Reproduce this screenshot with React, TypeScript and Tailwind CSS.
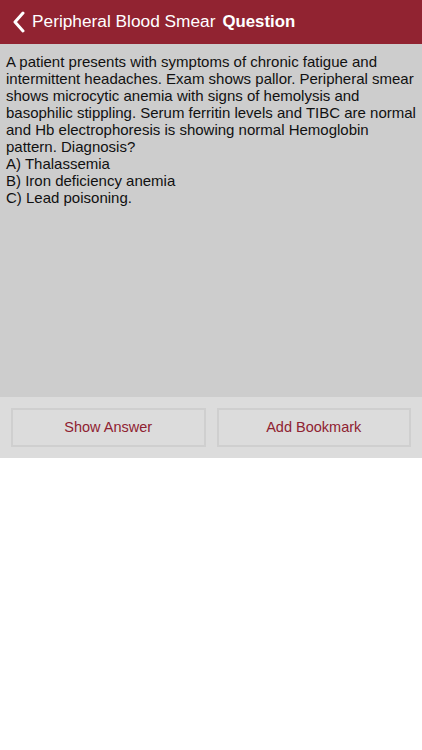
import React from "react"

const lines = [
  "A patient presents with symptoms of chronic fatigue and",
  "intermittent headaches. Exam shows pallor. Peripheral smear",
  "shows microcytic anemia with signs of hemolysis and",
  "basophilic stippling. Serum ferritin levels and TIBC are normal",
  "and Hb electrophoresis is showing normal Hemoglobin",
  "pattern. Diagnosis?",
  "A) Thalassemia",
  "B) Iron deficiency anemia",
  "C) Lead poisoning.",
]

const App = () => {
  return (
    <div className="w-[422px] h-[750px] bg-white font-['Liberation_Sans',Arial,sans-serif]">
      <header className="h-[44px] bg-[#912331] flex items-center text-white">
        <svg width="14" height="22" viewBox="0 0 14 22" className="ml-[12px] mr-[6px]">
          <path d="M11 2 L3 11 L11 20" fill="none" stroke="white" strokeWidth="3" strokeLinecap="round" strokeLinejoin="round" />
        </svg>
        <span className="text-[17.3px]">Peripheral Blood Smear</span>
        <span className="text-[16.8px] font-bold ml-[7px]">Question</span>
      </header>

      <div className="h-[353px] bg-[#cdcdcd] px-[6px] pt-[9px] text-[15px] leading-[17px] text-[#111]">
        {lines.map((l) => (
          <div key={l} className="whitespace-nowrap">{l}</div>
        ))}
      </div>

      <div className="h-[61px] bg-[#dcdcdc] flex gap-[11px] px-[11px] pt-[11px] pb-[11px]">
        <button className="flex-1 border-2 border-[#cfcfcf] bg-[#dcdcdc] text-[#8f2231] text-[14.5px]">
          Show Answer
        </button>
        <button className="flex-1 border-2 border-[#cfcfcf] bg-[#dcdcdc] text-[#8f2231] text-[14.5px]">
          Add Bookmark
        </button>
      </div>
    </div>
  )
}

export default App
